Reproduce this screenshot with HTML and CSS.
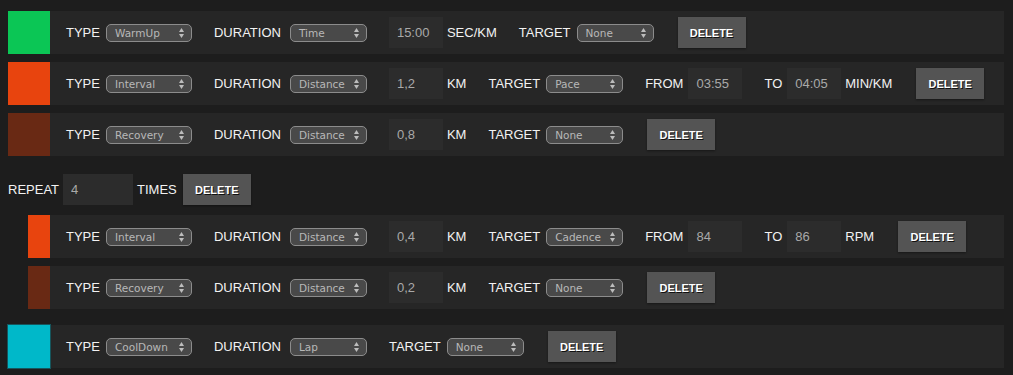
FILE: index.html
```html
<!DOCTYPE html>
<html lang="en">
<head>
    <meta charset="UTF-8">
    <title>Workout steps</title>
    <link rel="stylesheet" href="styles.css">
</head>
<body>
    <div class="step">
        <div class="swatch warmup"></div>
        <div class="field"><span class="lbl">TYPE</span><span class="select wide">WarmUp<svg viewBox="0 0 5 10"><polygon points="0,4 2.5,0 5,4"/><polygon points="0,6 2.5,10 5,6"/></svg></span></div>
        <div class="field"><span class="lbl dur">DURATION</span><span class="select">Time<svg viewBox="0 0 5 10"><polygon points="0,4 2.5,0 5,4"/><polygon points="0,6 2.5,10 5,6"/></svg></span></div>
        <div class="field"><input class="inp" value="15:00"><span class="unit">SEC/KM</span></div>
        <div class="field"><span class="lbl">TARGET</span><span class="select">None<svg viewBox="0 0 5 10"><polygon points="0,4 2.5,0 5,4"/><polygon points="0,6 2.5,10 5,6"/></svg></span></div>
        <button class="delete">DELETE</button>
    </div>

    <div class="step">
        <div class="swatch interval"></div>
        <div class="field"><span class="lbl">TYPE</span><span class="select wide">Interval<svg viewBox="0 0 5 10"><polygon points="0,4 2.5,0 5,4"/><polygon points="0,6 2.5,10 5,6"/></svg></span></div>
        <div class="field"><span class="lbl dur">DURATION</span><span class="select">Distance<svg viewBox="0 0 5 10"><polygon points="0,4 2.5,0 5,4"/><polygon points="0,6 2.5,10 5,6"/></svg></span></div>
        <div class="field"><input class="inp" value="1,2"><span class="unit">KM</span></div>
        <div class="field"><span class="lbl">TARGET</span><span class="select">Pace<svg viewBox="0 0 5 10"><polygon points="0,4 2.5,0 5,4"/><polygon points="0,6 2.5,10 5,6"/></svg></span></div>
        <div class="field"><span class="lbl short">FROM</span><input class="inp" value="03:55"></div>
        <div class="field"><span class="lbl short">TO</span><input class="inp" value="04:05"><span class="unit">MIN/KM</span></div>
        <button class="delete">DELETE</button>
    </div>

    <div class="step">
        <div class="swatch recovery"></div>
        <div class="field"><span class="lbl">TYPE</span><span class="select wide">Recovery<svg viewBox="0 0 5 10"><polygon points="0,4 2.5,0 5,4"/><polygon points="0,6 2.5,10 5,6"/></svg></span></div>
        <div class="field"><span class="lbl dur">DURATION</span><span class="select">Distance<svg viewBox="0 0 5 10"><polygon points="0,4 2.5,0 5,4"/><polygon points="0,6 2.5,10 5,6"/></svg></span></div>
        <div class="field"><input class="inp" value="0,8"><span class="unit">KM</span></div>
        <div class="field"><span class="lbl">TARGET</span><span class="select">None<svg viewBox="0 0 5 10"><polygon points="0,4 2.5,0 5,4"/><polygon points="0,6 2.5,10 5,6"/></svg></span></div>
        <button class="delete">DELETE</button>
    </div>

    <div class="repeat">
        <span class="lbl short">REPEAT</span>
        <input class="inp repeat-inp" value="4">
        <span class="unit">TIMES</span>
        <button class="delete">DELETE</button>
    </div>

    <div class="step nested">
        <div class="swatch interval"></div>
        <div class="field"><span class="lbl">TYPE</span><span class="select wide">Interval<svg viewBox="0 0 5 10"><polygon points="0,4 2.5,0 5,4"/><polygon points="0,6 2.5,10 5,6"/></svg></span></div>
        <div class="field"><span class="lbl dur">DURATION</span><span class="select">Distance<svg viewBox="0 0 5 10"><polygon points="0,4 2.5,0 5,4"/><polygon points="0,6 2.5,10 5,6"/></svg></span></div>
        <div class="field"><input class="inp" value="0,4"><span class="unit">KM</span></div>
        <div class="field"><span class="lbl">TARGET</span><span class="select">Cadence<svg viewBox="0 0 5 10"><polygon points="0,4 2.5,0 5,4"/><polygon points="0,6 2.5,10 5,6"/></svg></span></div>
        <div class="field"><span class="lbl short">FROM</span><input class="inp" value="84"></div>
        <div class="field"><span class="lbl short">TO</span><input class="inp" value="86"><span class="unit">RPM</span></div>
        <button class="delete">DELETE</button>
    </div>

    <div class="step nested">
        <div class="swatch recovery"></div>
        <div class="field"><span class="lbl">TYPE</span><span class="select wide">Recovery<svg viewBox="0 0 5 10"><polygon points="0,4 2.5,0 5,4"/><polygon points="0,6 2.5,10 5,6"/></svg></span></div>
        <div class="field"><span class="lbl dur">DURATION</span><span class="select">Distance<svg viewBox="0 0 5 10"><polygon points="0,4 2.5,0 5,4"/><polygon points="0,6 2.5,10 5,6"/></svg></span></div>
        <div class="field"><input class="inp" value="0,2"><span class="unit">KM</span></div>
        <div class="field"><span class="lbl">TARGET</span><span class="select">None<svg viewBox="0 0 5 10"><polygon points="0,4 2.5,0 5,4"/><polygon points="0,6 2.5,10 5,6"/></svg></span></div>
        <button class="delete">DELETE</button>
    </div>

    <div class="step last">
        <div class="swatch cooldown"></div>
        <div class="field"><span class="lbl">TYPE</span><span class="select wide">CoolDown<svg viewBox="0 0 5 10"><polygon points="0,4 2.5,0 5,4"/><polygon points="0,6 2.5,10 5,6"/></svg></span></div>
        <div class="field"><span class="lbl dur">DURATION</span><span class="select">Lap<svg viewBox="0 0 5 10"><polygon points="0,4 2.5,0 5,4"/><polygon points="0,6 2.5,10 5,6"/></svg></span></div>
        <div class="field"><span class="lbl">TARGET</span><span class="select">None<svg viewBox="0 0 5 10"><polygon points="0,4 2.5,0 5,4"/><polygon points="0,6 2.5,10 5,6"/></svg></span></div>
        <button class="delete">DELETE</button>
    </div>
</body>
</html>
```

FILE: styles.css
```css
*, *::before, *::after {
    box-sizing: border-box;
}

body {
    margin: 0;
    padding: 11px 9px 0 8px;
    background-color: #1d1d1d;
    color: #f2f2f2;
    font-family: "Liberation Sans", Arial, sans-serif;
    font-size: 13px;
}

/* Filas de pasos */
.step {
    display: flex;
    align-items: center;
    height: 43px;
    background-color: #262626;
    margin-bottom: 8px;
}
.step.nested {
    margin-left: 20px;
}
.step.last {
    margin-top: 16px;
}

.swatch {
    width: 42px;
    align-self: stretch;
    margin-right: 16px;
}
.nested .swatch {
    width: 22px;
}
.swatch.warmup { background-color: #0bc655; }
.swatch.interval { background-color: #e8440e; }
.swatch.recovery { background-color: #692914; }
.swatch.cooldown {
    background-color: #00b8c9;
    outline: 1px solid #16555c;
}

.field {
    display: flex;
    align-items: center;
    margin-right: 22px;
}

.lbl {
    margin-right: 6px;
}
.lbl.dur {
    margin-right: 9px;
}
.lbl.short {
    margin-right: 5px;
}
.unit {
    margin-left: 4px;
}

/* Selects falsos */
.select {
    display: flex;
    align-items: center;
    justify-content: space-between;
    width: 77px;
    height: 18px;
    padding: 0 7px 0 8px;
    border: 1px solid #8c8c8c;
    border-radius: 5px;
    background-color: #494949;
    color: #b8b8b8;
    font-family: "DejaVu Sans", sans-serif;
    font-size: 10.5px;
}
.select.wide {
    width: 86px;
}
.select svg {
    width: 5px;
    height: 10px;
    fill: #bdbdbd;
}

.inp {
    width: 54px;
    height: 31px;
    padding: 0 8px;
    border: none;
    outline: none;
    background-color: #2c2c2c;
    color: #a9a9a9;
    font-family: "Liberation Sans", Arial, sans-serif;
    font-size: 13px;
}

.delete {
    width: 68px;
    height: 31px;
    margin-left: 2px;
    padding: 0;
    border: none;
    background-color: #545454;
    color: #fff;
    font-family: "Liberation Sans", Arial, sans-serif;
    font-size: 11px;
    font-weight: bold;
    text-shadow: 1px 1px 0 #111;
    box-shadow: 0 1px 2px rgba(0,0,0,0.4);
    cursor: pointer;
}

/* Bloque de repeticion */
.repeat {
    display: flex;
    align-items: center;
    height: 31px;
    margin: 18px 0 10px;
}
.repeat .lbl {
    margin-right: 4px;
}
.repeat-inp {
    width: 70px;
}
.repeat .unit {
    margin-right: 4px;
}
```
